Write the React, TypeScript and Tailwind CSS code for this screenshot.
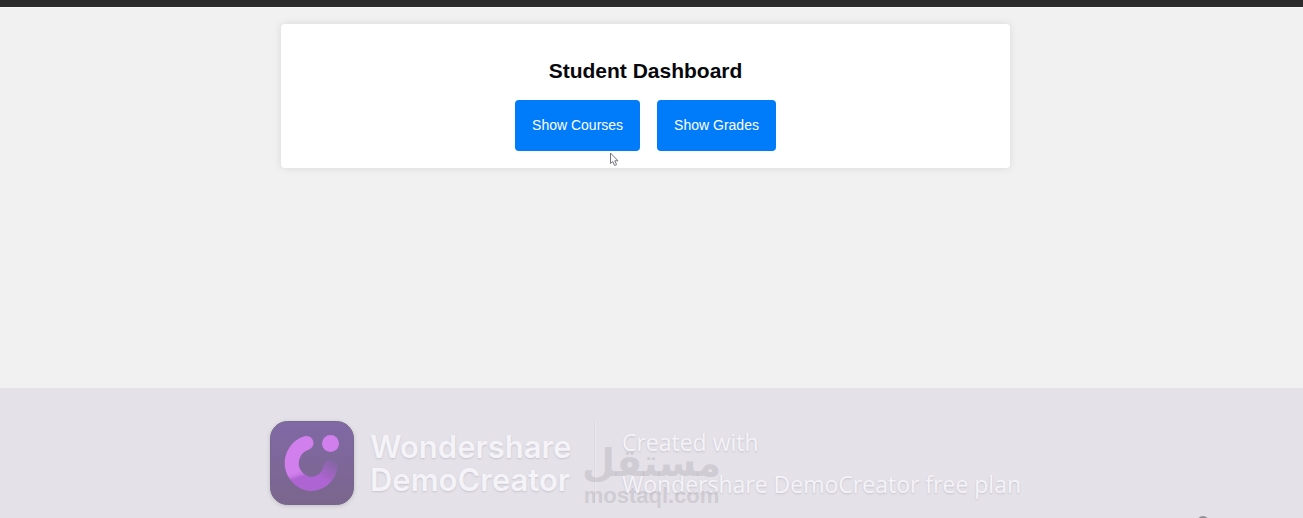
function CreatorLogo() {
  return (
    <svg viewBox="0 0 84 84" className="size-[84px] shrink-0 drop-shadow-sm" aria-hidden="true">
      <defs>
        <linearGradient id="tile" x1="0" y1="0" x2="0" y2="1">
          <stop offset="0" stopColor="#8069a5" />
          <stop offset="1" stopColor="#7a668d" />
        </linearGradient>
        <linearGradient id="ring" gradientUnits="userSpaceOnUse" x1="20" y1="53" x2="22" y2="59">
          <stop offset="0" stopColor="#d07fec" />
          <stop offset="0.5" stopColor="#c877e6" />
          <stop offset="1" stopColor="#ae64d2" />
        </linearGradient>
        <linearGradient id="tail" gradientUnits="userSpaceOnUse" x1="53" y1="58" x2="65" y2="41">
          <stop offset="0" stopColor="#ae64d2" />
          <stop offset="1" stopColor="#8366a2" />
        </linearGradient>
      </defs>
      <rect x="0.5" y="0.5" width="83" height="83" rx="17" fill="url(#tile)" stroke="#75688c" />
      <path d="M40.500 63A20 20 0 0 0 60.500 46" fill="none" stroke="url(#tail)" strokeWidth="14" strokeLinecap="round" />
      <path d="M36.500 22A21 21 0 0 0 41 63" fill="none" stroke="url(#ring)" strokeWidth="14" strokeLinecap="round" />
      <circle cx="60.500" cy="22.500" r="8.500" fill="#d07fec" />
    </svg>
  );
}

function Pointer() {
  return (
    <svg viewBox="0 0 10 15" className="absolute -bottom-4 right-[21px] h-[15px] w-[10px]" aria-hidden="true">
      <path d="M1.500 1v10.500l2.300-2 1.800 4 2-.9-1.800-3.800H9z" fill="#fff" stroke="#77757f" strokeWidth="1" />
    </svg>
  );
}

const buttonClass =
  "cursor-pointer rounded bg-[#007bfa] px-[17px] py-[15px] text-[14px] leading-[21px] text-white";

export default function App() {
  return (
    <div className="flex min-h-screen flex-col overflow-hidden bg-[#f1f1f1] font-['Liberation_Sans',Arial,sans-serif]">
      <header className="h-2 border-b border-[#f8f8f8] bg-[#2c2c2c]" />

      <main className="px-4 pt-4 pr-7 pb-6">
        <section className="mx-auto w-full max-w-[729px] rounded bg-white px-4 pt-[35px] pb-[17px] text-center shadow-[0_0_9px_rgba(0,0,0,0.1)]">
          <h1 className="text-[21px] leading-6 font-bold text-[#08080c]">Student Dashboard</h1>
          <div className="mt-[17px] flex flex-wrap justify-center gap-[17px]">
            <div className="relative">
              <button type="button" className={buttonClass}>Show Courses</button>
              <Pointer />
            </div>
            <button type="button" className={buttonClass}>Show Grades</button>
          </div>
        </section>
      </main>

      <footer className="relative mt-auto bg-[#e4e1e8] pt-[33px] pr-3 pb-[13px]">
        <div className="flex items-center justify-center text-[#f4f3f7] [text-shadow:0_1px_2px_rgba(90,80,105,0.2)]">
          <CreatorLogo />
          <p className="ml-4 w-[200px] font-['Inter',sans-serif] text-[31px] leading-[33px] font-semibold whitespace-nowrap">
            Wondershare
            <br />
            DemoCreator
          </p>
          <div className="ml-6 h-[84px] w-0.5 border-l border-[#dcd9e0] bg-[#eae8ee]" />
          <p className="ml-[26px] font-['Open_Sans',sans-serif] text-[23px] leading-[42px] whitespace-nowrap">
            Created with
            <br />
            Wondershare DemoCreator free plan
          </p>
        </div>

        <div className="pointer-events-none absolute inset-x-0 top-[50px] flex justify-center text-[#77757b]/20">
          <div className="flex flex-col items-center">
            <span lang="ar" dir="rtl" className="font-['DejaVu_Sans',sans-serif] text-[38px] leading-[50px] font-bold">
              مستقل
            </span>
            <span className="-mt-1 font-['Liberation_Sans',Arial,sans-serif] text-[22px] leading-6 font-bold">mostaql.com</span>
          </div>
        </div>

        <div className="absolute right-[92px] bottom-0 h-0.5 w-4 overflow-hidden">
          <div className="mx-auto size-3 rounded-full bg-[#918f96]" />
        </div>
      </footer>
    </div>
  );
}
